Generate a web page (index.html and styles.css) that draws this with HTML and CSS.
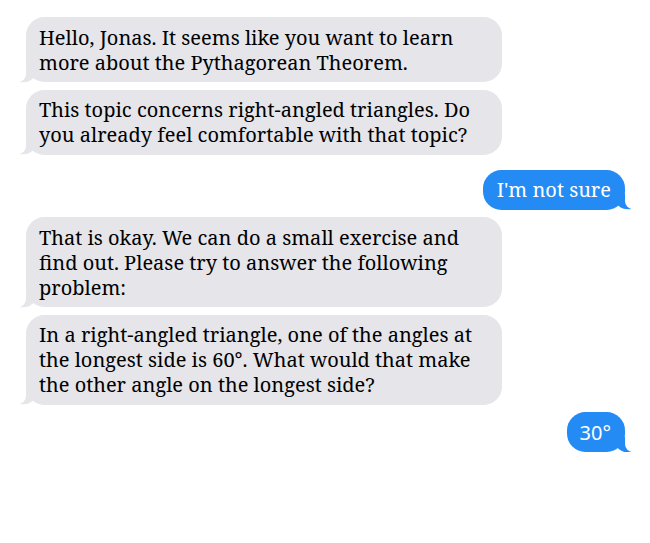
FILE: index.html
```html
<!DOCTYPE html>
<html>
<head>
<meta charset="utf-8">
<link rel="stylesheet" href="styles.css">
</head>
<body>
<div class="imessage">
  <p class="msg from-them">Hello, Jonas. It seems like you want to learn more about the Pythagorean Theorem.</p>
  <p class="msg from-them">This topic concerns right-angled triangles. Do you already feel comfortable with that topic?</p>
  <p class="msg from-me spaced">I'm not sure</p>
  <p class="msg from-them">That is okay. We can do a small exercise and find out. Please try to answer the following problem:</p>
  <p class="msg from-them">In a right-angled triangle, one of the angles at the longest side is 60°. What would that make the other angle on the longest side?</p>
  <p class="msg from-me sans">30°</p>
</div>
</body>
</html>
```
FILE: styles.css
```css
html, body {
  margin: 0;
  background: #fff;
}
.imessage {
  display: flex;
  flex-direction: column;
  gap: 7.5px;
  padding: 17px 25px 0 26px;
  font-family: "Noto Serif", "DejaVu Serif", serif;
  font-size: 20px;
  line-height: 25px;
}
.msg {
  margin: 0;
  position: relative;
  max-width: 476px;
  width: fit-content;
  box-sizing: border-box;
  padding: 7.5px 14px 7.5px 13px;
  border-radius: 18.4px;
}
.msg::before, .msg::after {
  content: "";
  position: absolute;
  bottom: -1.6px;
  height: 16px;
}
.from-them {
  align-self: flex-start;
  width: 476px;
  background: #e5e5ea;
  color: #000;
}
.from-them::before {
  left: -5.6px;
  border-left: 16px solid #e5e5ea;
  border-bottom-right-radius: 12.8px 11.2px;
  transform: translate(0, -1.6px);
}
.from-them::after {
  left: -10px;
  width: 10px;
  background: #fff;
  border-bottom-right-radius: 8px;
  transform: translate(0, -2px);
}
.from-me {
  align-self: flex-end;
  background: #248bf5;
  color: #fff;
  padding-left: 14px;
  padding-right: 14px;
}
.from-me::before {
  right: -5.6px;
  border-right: 16px solid #248bf5;
  border-bottom-left-radius: 12.8px 11.2px;
  transform: translate(0, -1.6px);
}
.from-me::after {
  right: -10px;
  width: 10px;
  background: #fff;
  border-bottom-left-radius: 8px;
  transform: translate(0, -2px);
}
.spaced {
  margin-top: 7.5px;
}
.sans {
  font-family: "Noto Sans", "Open Sans", sans-serif;
  padding-left: 13px;
}
```
